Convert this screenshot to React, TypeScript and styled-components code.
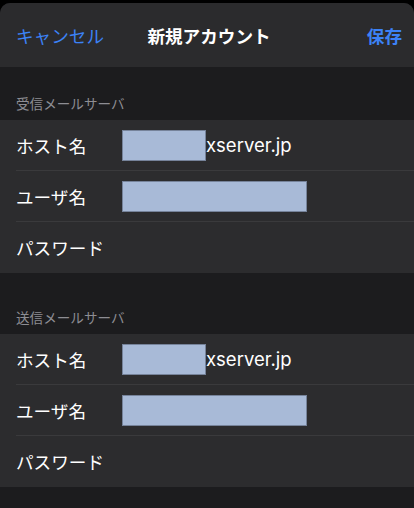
import React from 'react';
import styled, { createGlobalStyle } from 'styled-components';

const GlobalStyle = createGlobalStyle`
  html, body {
    margin: 0;
    padding: 0;
    background: #000;
  }
  body {
    font-family: 'Inter', 'Noto Sans CJK JP', sans-serif;
    -webkit-font-smoothing: antialiased;
  }
`;

const Sheet = styled.div`
  margin-top: 3px;
  height: 505px;
  background: #1c1c1e;
  border-radius: 10px 10px 0 0;
  overflow: hidden;
`;

const NavBar = styled.div`
  height: 64px;
  background: #2b2b2d;
  display: grid;
  grid-template-columns: 1fr auto 1fr;
  align-items: center;
  padding: 0 12px 0 16px;
  font-family: 'Noto Sans CJK JP', sans-serif;
  font-size: 17.6px;
`;

const NavButton = styled.span<{ $right?: boolean }>`
  color: #3c82f6;
  justify-self: ${(p) => (p.$right ? 'end' : 'start')};
  font-weight: ${(p) => (p.$right ? 700 : 400)};
`;

const Title = styled.span`
  color: #fff;
  font-weight: 700;
`;

const SectionHeader = styled.div<{ $height: number }>`
  height: ${(p) => p.$height}px;
  display: flex;
  align-items: flex-end;
  padding: 0 16px 8px;
  box-sizing: border-box;
  color: #8d8d93;
  font-family: 'Noto Sans CJK JP', sans-serif;
  font-size: 13.6px;
  line-height: 18px;
`;

const Group = styled.div`
  background: #2c2c2e;
  padding-left: 16px;
`;

const Row = styled.div`
  height: 51px;
  display: flex;
  align-items: center;
  box-sizing: border-box;
  border-bottom: 1px solid #3a3a3c;

  &:last-child {
    border-bottom: none;
  }
`;

const Label = styled.span`
  width: 106px;
  flex-shrink: 0;
  color: #fff;
  font-family: 'Noto Sans CJK JP', sans-serif;
  font-size: 17.6px;
`;

const Value = styled.div`
  display: flex;
  align-items: center;
  color: #fff;
  font-family: 'Inter', 'Noto Sans CJK JP', sans-serif;
  font-size: 18.5px;
`;

const Redacted = styled.span<{ $width: number }>`
  display: block;
  width: ${(p) => p.$width}px;
  height: 31px;
  box-sizing: border-box;
  background: #a8bad7;
  border: 1px solid #76839a;
`;

const ServerGroup: React.FC = () => (
  <Group>
    <Row>
      <Label>ホスト名</Label>
      <Value>
        <Redacted $width={84} />
        xserver.jp
      </Value>
    </Row>
    <Row>
      <Label>ユーザ名</Label>
      <Value>
        <Redacted $width={185} />
      </Value>
    </Row>
    <Row>
      <Label>パスワード</Label>
    </Row>
  </Group>
);

const App: React.FC = () => {
  return (
    <>
      <GlobalStyle />
      <Sheet>
        <NavBar>
          <NavButton>キャンセル</NavButton>
          <Title>新規アカウント</Title>
          <NavButton $right>保存</NavButton>
        </NavBar>
        <SectionHeader $height={53}>受信メールサーバ</SectionHeader>
        <ServerGroup />
        <SectionHeader $height={61}>送信メールサーバ</SectionHeader>
        <ServerGroup />
      </Sheet>
    </>
  );
};

export default App;
